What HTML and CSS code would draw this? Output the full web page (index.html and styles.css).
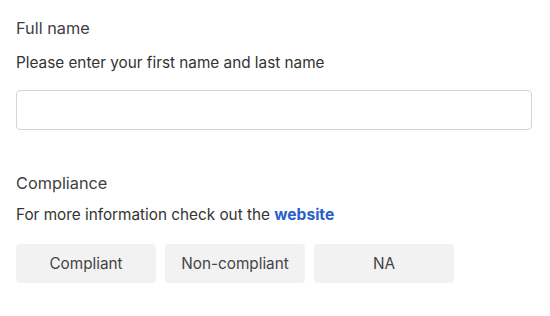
FILE: index.html
```html
<!DOCTYPE html>
<html lang="en">
<head>
    <meta charset="UTF-8">
    <meta name="viewport" content="width=device-width, initial-scale=1.0">
    <title>Form</title>
    <link rel="stylesheet" href="styles.css">
</head>
<body>
    <div class="form">
        <div class="field">
            <label class="field-label" for="fullName">Full name</label>
            <p class="field-help">Please enter your first name and last name</p>
            <input type="text" id="fullName" class="text-input">
        </div>
        <div class="field field-compliance">
            <div class="field-label">Compliance</div>
            <p class="field-help">For more information check out the <a href="#">website</a></p>
            <div class="choices">
                <button type="button" class="choice">Compliant</button>
                <button type="button" class="choice">Non-compliant</button>
                <button type="button" class="choice">NA</button>
            </div>
        </div>
    </div>
</body>
</html>
```

FILE: styles.css
```css
body {
    font-family: Inter, "Noto Sans", sans-serif;
    background-color: #fff;
    color: #3a3a3a;
    margin: 0;
    padding: 0;
}
.form {
    padding: 16px 18px 16px 16px;
}
.field-label {
    display: block;
    font-size: 16.3px;
    line-height: 24px;
    color: #404040;
}
.field-help {
    margin: 13px 0 0;
    font-size: 15.3px;
    line-height: 20px;
    color: #333;
}
.field-help a {
    color: #2b5fc9;
    font-weight: bold;
    font-size: 15.6px;
    text-decoration: none;
}
.text-input {
    display: block;
    box-sizing: border-box;
    width: 100%;
    height: 40px;
    margin-top: 17px;
    border: 1px solid #d4d4d4;
    border-radius: 4px;
    background: #fff;
}
.field-compliance {
    margin-top: 41px;
}
.field-compliance .field-help {
    margin-top: 10px;
}
.choices {
    display: flex;
    gap: 9px;
    margin-top: 19px;
}
.choice {
    width: 140px;
    height: 39px;
    border: none;
    border-radius: 4px;
    background-color: #f2f2f2;
    color: #444;
    font-family: inherit;
    font-size: 15.3px;
}
```
